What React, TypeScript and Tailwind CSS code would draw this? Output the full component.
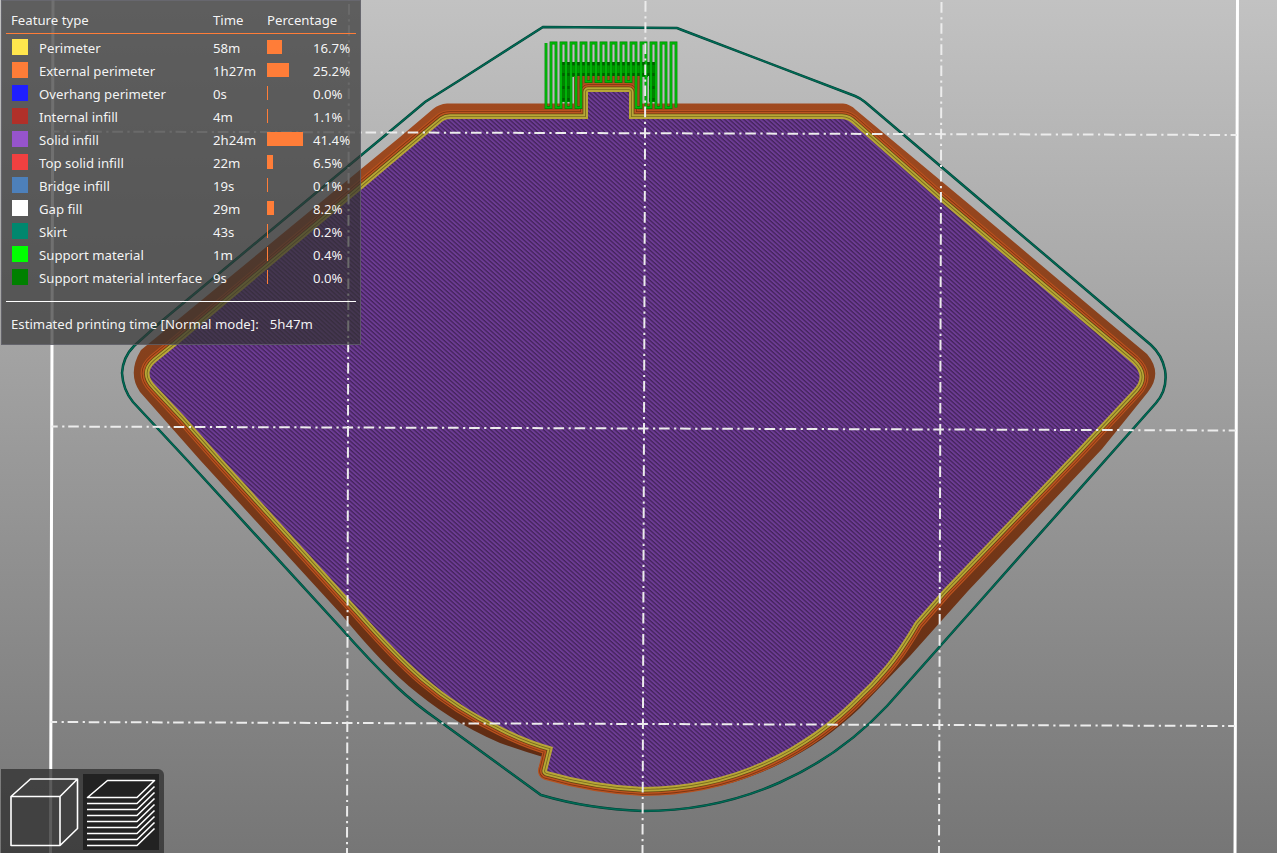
const features = [
  { name: 'Perimeter', swatch: 'bg-[#ffe64d]', time: '58m', pct: '16.7%', bar: 15 },
  { name: 'External perimeter', swatch: 'bg-[#ff7d38]', time: '1h27m', pct: '25.2%', bar: 22 },
  { name: 'Overhang perimeter', swatch: 'bg-[#1f1fff]', time: '0s', pct: '0.0%', bar: 1 },
  { name: 'Internal infill', swatch: 'bg-[#b03029]', time: '4m', pct: '1.1%', bar: 1 },
  { name: 'Solid infill', swatch: 'bg-[#9654cc]', time: '2h24m', pct: '41.4%', bar: 36 },
  { name: 'Top solid infill', swatch: 'bg-[#f04040]', time: '22m', pct: '6.5%', bar: 6 },
  { name: 'Bridge infill', swatch: 'bg-[#4d80ba]', time: '19s', pct: '0.1%', bar: 1 },
  { name: 'Gap fill', swatch: 'bg-white', time: '29m', pct: '8.2%', bar: 7 },
  { name: 'Skirt', swatch: 'bg-[#00876e]', time: '43s', pct: '0.2%', bar: 1 },
  { name: 'Support material', swatch: 'bg-[#00ff00]', time: '1m', pct: '0.4%', bar: 1 },
  { name: 'Support material interface', swatch: 'bg-[#008000]', time: '9s', pct: '0.0%', bar: 1 },
];

const infill =
  'M450 119H588V92H629V119H842Q848 119 854 125L940 201L1132 363Q1146 376 1134 389L1077 450L943 590L915 622Q908 634 902 643Q891 660 880 672Q870 684 860 693C805 750 730 787 643 787Q596 785 547 771L553 747Q527 740 502 727C440 698 405 662 360 611L223 460L185 417L156 386Q143 373 156 362L177 345L400 157L443 121Q446 119 450 119Z';

const wall =
  'M447 103.500H574V76H642V103.500H843Q850 104 856 110L970 205L1105 319L1147 354Q1163 373 1148 392L1102 449L968 591L943 619L910 656L860 708C800 765 725 795 643 795Q590 792 545 778Q536 773 540 764L543 757Q522 751 500 743C425 710 385 667 340 613L200 460L140 392Q127 373 141 350L400 137L433 109Q439 104 447 103.500Z';

const skirt =
  'M543 27L677 28L682 30L855 96Q860 98 865 102L1151 345Q1162 355 1165 370Q1168 389 1156 403L990 590L887 706C827 770 742 811 643 811Q588 809 541 795L438 720Q415 704 397 687Q369 660 340 627L187 460L133 402Q123 390 122 373Q123 357 134 346L163 320L400 123L425 102L460 80Z';

const supportPath = () => {
  let d = 'M546 43';
  for (let i = 0; i < 27; i++) {
    const x = 546 + i * 5;
    const bottom = x > 582 && x < 633 ? 81.5 : 107.5;
    if (i === 26) d += `L${x} 107.5`;
    else if (i % 2 === 0) d += `L${x} ${bottom}L${x + 5} ${bottom}`;
    else d += `L${x} 43L${x + 5} 43`;
  }
  return d;
};

function Bed() {
  const dash = '10.6 4.5 2.2 3.8';
  return (
    <g stroke="#ececec" strokeWidth="2" fill="none">
      <path d="M53 0L50.5 853M1237.5 0L1235 853" stroke="#fff" strokeWidth="3" />
      <path d="M53 131.500L1237 135" strokeDasharray={dash} strokeDashoffset="4" />
      <path d="M51.5 426.500L1236 430.500" strokeDasharray={dash} strokeDashoffset="4.4" />
      <path d="M50.5 722L1235 726" strokeDasharray={dash} strokeDashoffset="4" />
      <path d="M349 0L347 853" strokeDasharray={dash} strokeDashoffset="17" />
      <path d="M645.5 0L642.5 853" strokeDasharray={dash} strokeDashoffset="20" />
      <path d="M941.5 0L939 853" strokeDasharray={dash} strokeDashoffset="19" />
    </g>
  );
}

function PrintBed() {
  const s = supportPath();
  return (
    <svg className="block h-[853px] w-[1277px]" viewBox="0 0 1277 853">
      <defs>
        <linearGradient id="bg" x1="0" y1="0" x2="0" y2="1">
          <stop offset="0" stopColor="#c2c2c2" />
          <stop offset="1" stopColor="#767676" />
        </linearGradient>
        <linearGradient id="side" x1="0" y1="0" x2="0" y2="1">
          <stop offset="0" stopColor="#a34b20" />
          <stop offset="0.4" stopColor="#85401c" />
          <stop offset="1" stopColor="#5c2a12" />
        </linearGradient>
        <pattern id="hatch" width="3.2" height="3.2" patternUnits="userSpaceOnUse" patternTransform="rotate(42)">
          <rect width="3.2" height="3.2" fill="#6d3c94" />
          <rect width="3.2" height="1.3" fill="#43235a" />
        </pattern>
      </defs>
      <rect width="1277" height="853" fill="url(#bg)" />
      <path d={skirt} fill="none" stroke="#003f33" strokeWidth="2.5" />
      <path d={skirt} fill="none" stroke="#006b56" strokeWidth="1.4" />
      <g shapeRendering="crispEdges">
        <path d="M562 63H657V102H649V75H571V102H562Z" fill="#008400" />
        <path d="M571 66H648V77H571Z" fill="#009b00" />
        <path d="M562 63.500H657M562 74.500H657M562 87.500H570M649 87.500H657M562 99.500H570M649 99.500H657" stroke="#005d00" strokeWidth="3" />
      </g>
      <path d={wall} fill="url(#side)" />
      <g fill="none" strokeLinejoin="round">
        <path d={infill} stroke="#b9521f" strokeWidth="18" />
        <path d={infill} stroke="#7a3513" strokeWidth="15.500" />
        <path d={infill} stroke="#bd5420" strokeWidth="14" />
        <path d={infill} stroke="#5f4113" strokeWidth="10.800" />
        <path d={infill} stroke="#b8a636" strokeWidth="9.300" />
        <path d={infill} stroke="#776b1e" strokeWidth="5.700" />
        <path d={infill} stroke="#b8a636" strokeWidth="4" />
      </g>
      <path d={infill} fill="url(#hatch)" />
      <g fill="none">
        <path d={s} stroke="#007e00" strokeWidth="2.800" />
        <path d={s} stroke="#00bd0a" strokeWidth="1.700" />
      </g>
      <Bed />
    </svg>
  );
}

function Legend() {
  return (
    <section className="absolute left-0 top-0 ml-px h-[345px] w-[360px] border border-[#6e6e7a]/60 bg-[#333333]/70 pt-[8px] text-[13.2px] leading-[23px] text-white/95">
      <div className="mx-[4px] grid h-[25px] grid-cols-[202px_54px_1fr] border-b border-[#ff7d38] pl-[5px]">
        <span>Feature type</span>
        <span>Time</span>
        <span>Percentage</span>
      </div>
      <div className="pt-[3px]">
        {features.map((f) => (
          <div key={f.name} className="flex h-[23px] items-start pl-[10px] whitespace-nowrap">
            <span className={`mt-[2px] mr-[11px] size-4 shrink-0 ${f.swatch}`} />
            <span className="w-[174px] shrink-0">{f.name}</span>
            <span className="w-[54px] shrink-0">{f.time}</span>
            <span className="w-[46px] shrink-0">
              <span className="mt-[3px] block h-3.5 bg-[#ff7d38]" style={{ width: f.bar }} />
            </span>
            <span>{f.pct}</span>
          </div>
        ))}
      </div>
      <div className="mx-[4px] mt-[11px] border-t border-white pl-[5px] pt-[11px]">
        Estimated printing time [Normal mode]:<span className="ml-[11px]">5h47m</span>
      </div>
    </section>
  );
}

function ViewToolbar() {
  return (
    <nav className="absolute bottom-0 left-0 ml-px flex h-[84px] w-[163px] rounded-tr-md bg-[#333333]/80 pl-[6px] pt-[5px]">
      <button className="h-[76px] w-[76px]">
        <svg width="76" height="76" viewBox="7 774 76 76" fill="none" stroke="#fff" strokeWidth="1.6" strokeLinejoin="round">
          <path d="M11 796.500H60V845.500H11ZM11 796.500L30.500 779H77.500L60 796.500M77.500 779V828.500L60 845.500" />
        </svg>
      </button>
      <button className="h-[76px] w-[76px] bg-[#222222]">
        <svg width="76" height="76" viewBox="83 774 76 76" fill="none" stroke="#fff" strokeWidth="1.6" strokeLinejoin="round">
          <path d="M87.500 797.500L107.500 780.500H154.500L137 797.500Z" />
          {[803.5, 809.5, 815.5, 821.5, 827.5, 833.5, 839.5, 845.5].map((y) => (
            <path key={y} d={`M87 ${y}H137L154.500 ${y - 17}`} />
          ))}
        </svg>
      </button>
    </nav>
  );
}

export default function App() {
  return (
    <main className="relative h-[853px] w-[1277px] overflow-hidden font-['Noto_Sans',sans-serif]">
      <PrintBed />
      <Legend />
      <ViewToolbar />
    </main>
  );
}
